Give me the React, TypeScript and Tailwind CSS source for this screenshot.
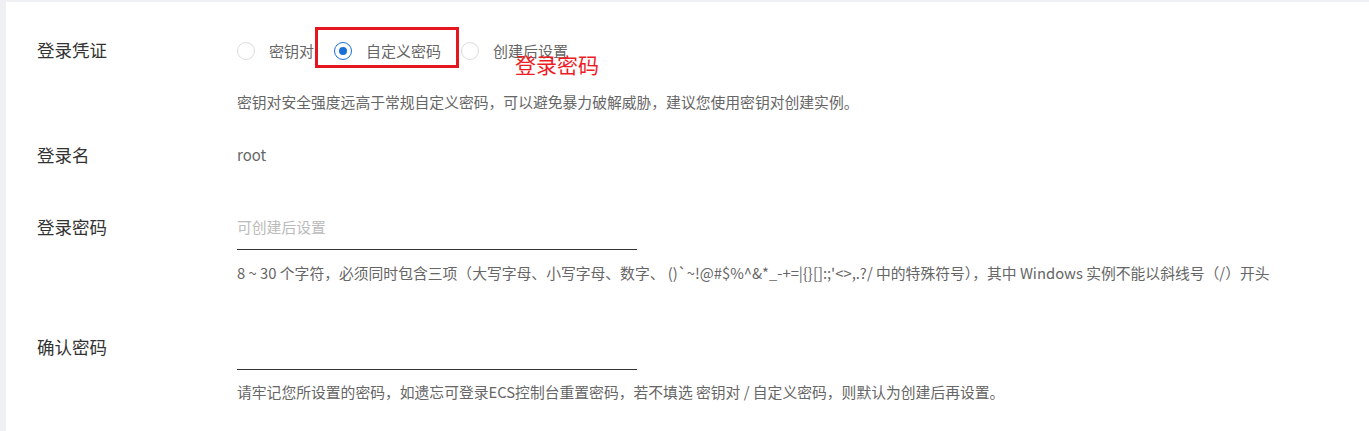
import React from 'react'

const font = { fontFamily: '"Noto Sans CJK SC", "Noto Sans", sans-serif' }

function Radio({ label, checked }: { label: string; checked?: boolean }) {
  return (
    <label className="mr-[20px] flex items-center">
      <span
        className={
          checked
            ? 'flex h-[18px] w-[18px] items-center justify-center rounded-full border border-[#1a6fd4] bg-white'
            : 'h-[18px] w-[18px] rounded-full border border-[#dcdcdc] bg-white'
        }
      >
        {checked && <span className="h-[8px] w-[8px] rounded-full bg-[#1a6fd4]" />}
      </span>
      <span className="ml-[14px] text-[15px] leading-[30px] text-[#666]">{label}</span>
    </label>
  )
}

function Label({ children }: { children: React.ReactNode }) {
  return <div className="w-[200px] shrink-0 text-[17.5px] leading-[30px] text-[#333]">{children}</div>
}

function Help({ children }: { children: React.ReactNode }) {
  return <p className="text-[14.8px] leading-[20px] text-[#666]">{children}</p>
}

export default function App() {
  return (
    <div className="min-h-screen bg-[#eff0f4] pl-[6px] pt-[2px]" style={font}>
      <div className="h-[429px] bg-white pl-[31px] pt-[33px]">
        {/* 登录凭证 */}
        <div className="flex">
          <Label>登录凭证</Label>
          <div>
            <div className="relative mt-[1px] flex items-center">
              <Radio label="密钥对" />
              <Radio label="自定义密码" checked />
              <Radio label="创建后设置" />
              <div className="pointer-events-none absolute left-[78px] top-[-9px] h-[41px] w-[144px] border-[3px] border-[#e4161f]" />
              <span className="pointer-events-none absolute left-[278px] top-[18px] text-[21px] leading-none text-[#ee1c25]">
                登录密码
              </span>
            </div>
            <div className="mt-[26px]">
              <Help>密钥对安全强度远高于常规自定义密码，可以避免暴力破解威胁，建议您使用密钥对创建实例。</Help>
            </div>
          </div>
        </div>

        {/* 登录名 */}
        <div className="mt-[28px] flex">
          <Label>登录名</Label>
          <div className="text-[15px] leading-[30px] text-[#666]">root</div>
        </div>

        {/* 登录密码 */}
        <div className="mt-[42px] flex">
          <Label>登录密码</Label>
          <div>
            <div className="h-[38px] w-[400px] border-b border-[#333] pb-[7px] text-[14.8px] leading-[30px] text-[#bbb]">
              可创建后设置
            </div>
            <div className="mt-[13px]">
              <Help>
                8 ~ 30 个字符，必须同时包含三项（大写字母、小写字母、数字、 ()`~!@#$%^&amp;*_-+=|{'{}'}[]:;'&lt;&gt;,.?/ 中的特殊符号），其中 Windows 实例不能以斜线号（/）开头
              </Help>
            </div>
          </div>
        </div>

        {/* 确认密码 */}
        <div className="mt-[49px] flex">
          <Label>确认密码</Label>
          <div>
            <div className="h-[38px] w-[400px] border-b border-[#333]" />
            <div className="mt-[12px]">
              <Help>请牢记您所设置的密码，如遗忘可登录ECS控制台重置密码，若不填选 密钥对 / 自定义密码，则默认为创建后再设置。</Help>
            </div>
          </div>
        </div>
      </div>
    </div>
  )
}
